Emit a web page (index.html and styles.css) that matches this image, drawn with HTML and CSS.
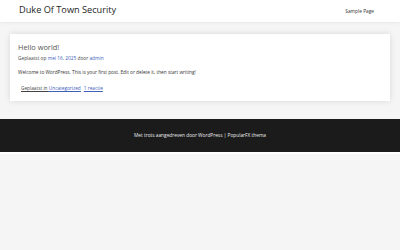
FILE: index.html
```html
<!DOCTYPE html>
<html lang="nl">
<head>
<meta charset="utf-8">
<title>Duke Of Town Security</title>
<link rel="stylesheet" href="styles.css">
</head>
<body>
<header class="site-header">
  <div class="site-title">Duke Of Town Security</div>
  <nav class="site-nav"><a href="#">Sample Page</a></nav>
</header>
<main class="site-main">
  <article class="post">
    <h2 class="post-title">Hello world!</h2>
    <div class="post-meta">Geplaatst op <a href="#">mei 16, 2025</a> door <a href="#">admin</a></div>
    <p class="post-content">Welcome to WordPress. This is your first post. Edit or delete it, then start writing!</p>
    <div class="post-footer"><span class="cat">Geplaatst in <a href="#">Uncategorized</a></span><a href="#">1 reactie</a></div>
  </article>
</main>
<footer class="site-footer">Met trots aangedreven door WordPress | PopularFX thema</footer>
<div class="after"></div>
</body>
</html>
```
FILE: styles.css
```css
html, body { margin: 0; padding: 0; }
body {
  background: #f5f5f5;
  font-family: "Open Sans", "Noto Sans", sans-serif;
  color: #333;
}
a { color: #4060b8; text-decoration: none; }
.site-header {
  background: #fff;
  height: 22px;
  display: flex;
  align-items: center;
  justify-content: space-between;
  padding: 0 26px 0 19px;
  box-shadow: 0 1px 3px rgba(0,0,0,0.06);
}
.site-title { font-size: 9.2px; line-height: 12px; color: #1e1e1e; margin-top: -3px; }
.site-nav { font-size: 4.8px; line-height: 7px; }
.site-nav a { color: #333; }
.site-main { padding: 12px 10px 18px 10px; }
.post {
  background: #fff;
  box-shadow: 0 0 6px rgba(0,0,0,0.12);
  padding: 7px 8px 8.5px 8px;
}
.post-title { margin: 0; font-weight: 400; font-size: 7.4px; color: #555; line-height: 12px; }
.post-meta { font-size: 4.8px; line-height: 7px; margin-top: 1.5px; color: #444; }
.post-content { font-size: 4.75px; line-height: 7px; margin: 7px 0 0 0; color: #333; }
.post-footer { font-size: 4.75px; line-height: 7px; margin: 9.5px 0 0 3px; color: #444; }
.post-footer .cat { text-decoration: underline; margin-right: 3px; }
.post-footer a { text-decoration: underline; }
.site-footer {
  background: #1b1b1b;
  color: #eee;
  height: 33px;
  display: flex;
  align-items: center;
  justify-content: center;
  font-size: 4.8px;
}
.after { height: 2px; background: #fff; }
```
